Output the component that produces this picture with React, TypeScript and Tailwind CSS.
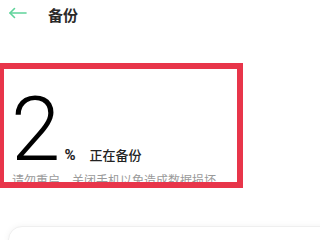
export default function App() {
  return (
    <div className="relative h-[240px] w-[320px] overflow-hidden bg-white font-['Noto_Sans_CJK_SC',sans-serif]">
      <header className="flex h-[26px] items-center pl-[8px]">
        <svg width="19" height="12" viewBox="0 0 19 12" fill="none" stroke="#5fd39a" strokeWidth="1.6" strokeLinecap="round" strokeLinejoin="round">
          <path d="M18 6H2" />
          <path d="M6.5 1.5 2 6l4.5 4.5" />
        </svg>
        <h1 className="ml-[21px] mt-[3px] text-[15px] font-bold leading-none text-[#2a2a2a]">备份</h1>
      </header>

      <section className="mt-[37px] h-[125px] w-[243px] overflow-hidden border-[6px] border-l-4 border-[#e8354a]">
        <div className="flex h-[104px] items-baseline pl-[7px] pt-[16px]">
          <span className="font-['Roboto',sans-serif] text-[89px] font-light leading-none text-black">2</span>
          <span className="ml-[4px] font-['Roboto',sans-serif] text-[15px] font-bold leading-none text-[#222]">%</span>
          <span className="ml-[14px] text-[13px] font-medium leading-none text-[#222]">正在备份</span>
        </div>
        <p className="whitespace-nowrap pl-[8px] text-[12px] leading-[14px] text-[#9a9a9a]">
          请勿重启，关闭手机以免造成数据损坏
        </p>
      </section>

      <div className="ml-[8px] mt-[38px] h-[60px] w-[330px] rounded-[14px] border border-[#efefef] bg-white shadow-[0_0_6px_rgba(0,0,0,0.05)]" />
    </div>
  );
}
